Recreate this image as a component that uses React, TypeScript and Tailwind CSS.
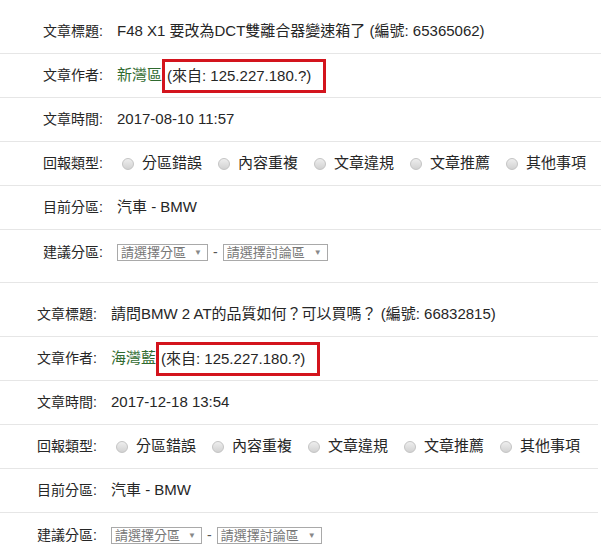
import React from "react";

const font = { fontFamily: '"Liberation Sans", Arial, "Noto Sans CJK TC", sans-serif' };

function Radio({ label }: { label: string }) {
  return (
    <span className="inline-flex items-center shrink-0 whitespace-nowrap mr-[11px]">
      <span className="ml-[5px] w-[12px] h-[12px] rounded-full border border-[#c4c4c4] bg-gradient-to-b from-[#eeeeee] to-[#d2d2d2]" />
      <span className="ml-[8px]">{label}</span>
    </span>
  );
}

function Select({ label, w }: { label: string; w: string }) {
  return (
    <span
      className={`inline-flex items-center justify-between h-[17px] border border-[#a9a9a9] pl-[3px] pr-[5px] text-[13px] leading-[15px] text-[#777] whitespace-nowrap ${w}`}
    >
      <span>{label}</span>
      <span className="text-[8px] text-[#888]">▼</span>
    </span>
  );
}

function Row({
  label,
  children,
  last,
  pad,
}: {
  label: string;
  children: React.ReactNode;
  last?: boolean;
  pad: string;
}) {
  return (
    <div className={`flex items-center h-[44px] ${pad} ${last ? "" : "border-b border-[#e6e6e6]"}`}>
      <span className="w-[74px] shrink-0 text-[14px]">{label}:</span>
      <div className="flex items-center text-[15px] whitespace-nowrap">{children}</div>
    </div>
  );
}

function Block({
  pad,
  title,
  author,
  time,
  width,
  topBorder,
}: {
  pad: string;
  title: string;
  author: string;
  time: string;
  width: string;
  topBorder?: boolean;
}) {
  return (
    <div className={`${width} pt-[10px] ${topBorder ? "border-t border-[#e6e6e6]" : ""}`}>
      <Row pad={pad} label="文章標題">
        <span>{title}</span>
      </Row>
      <Row pad={pad} label="文章作者">
        <span className="text-[#2f6a2f]">{author}</span>
        <span className="relative inline-block ml-[5px] h-[20px] leading-[20px]">
          (來自: 125.227.180.?)
          <span className="absolute left-[-5px] right-[-15px] top-[-7px] bottom-[-7px] border-[3px] border-[#d3141d]" />
        </span>
      </Row>
      <Row pad={pad} label="文章時間">
        <span>{time}</span>
      </Row>
      <Row pad={pad} label="回報類型">
        <span className="flex">
          <Radio label="分區錯誤" />
          <Radio label="內容重複" />
          <Radio label="文章違規" />
          <Radio label="文章推薦" />
          <Radio label="其他事項" />
        </span>
      </Row>
      <Row pad={pad} label="目前分區">
        <span>汽車 - BMW</span>
      </Row>
      <Row pad={pad} label="建議分區" last>
        <Select label="請選擇分區" w="w-[91px]" />
        <span className="mx-[5px] text-[14px] text-[#555]">-</span>
        <Select label="請選擇討論區" w="w-[105px]" />
      </Row>
    </div>
  );
}

export default function App() {
  return (
    <div className="w-[601px] h-[552px] bg-white text-[#262626] overflow-hidden" style={font}>
      <Block
        pad="pl-[43px]"
        width="w-[601px]"
        title="F48 X1 要改為DCT雙離合器變速箱了 (編號: 65365062)"
        author="新灣區"
        time="2017-08-10 11:57"
      />
      <div className="h-[8px]" />
      <Block
        pad="pl-[37px]"
        width="w-[598px]"
        title="請問BMW 2 AT的品質如何？可以買嗎？ (編號: 66832815)"
        author="海灣藍"
        time="2017-12-18 13:54"
        topBorder
      />
    </div>
  );
}
